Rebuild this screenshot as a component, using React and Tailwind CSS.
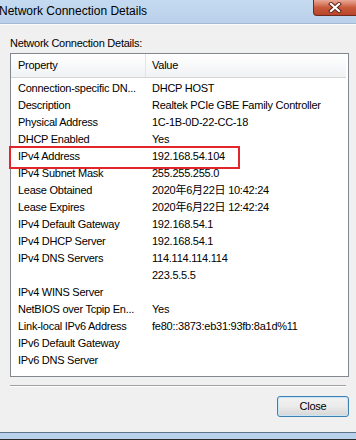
import React from "react";

const rows = [
  ["Connection-specific DN...", "DHCP HOST"],
  ["Description", "Realtek PCIe GBE Family Controller"],
  ["Physical Address", "1C-1B-0D-22-CC-18"],
  ["DHCP Enabled", "Yes"],
  ["IPv4 Address", "192.168.54.104"],
  ["IPv4 Subnet Mask", "255.255.255.0"],
  ["Lease Obtained", "2020年6月22日 10:42:24"],
  ["Lease Expires", "2020年6月22日 12:42:24"],
  ["IPv4 Default Gateway", "192.168.54.1"],
  ["IPv4 DHCP Server", "192.168.54.1"],
  ["IPv4 DNS Servers", "114.114.114.114"],
  ["", "223.5.5.5"],
  ["IPv4 WINS Server", ""],
  ["NetBIOS over Tcpip En...", "Yes"],
  ["Link-local IPv6 Address", "fe80::3873:eb31:93fb:8a1d%11"],
  ["IPv6 Default Gateway", ""],
  ["IPv6 DNS Server", ""],
];

function CloseX() {
  return (
    <svg width="14" height="11" viewBox="0 0 14 11">
      <path d="M3 2 L11 9 M11 2 L3 9" stroke="#5a1f14" strokeWidth="4" strokeLinecap="square" />
      <path d="M3 2 L11 9 M11 2 L3 9" stroke="#ffffff" strokeWidth="2.2" strokeLinecap="square" />
    </svg>
  );
}

export default function App() {
  return (
    <div className="relative w-[356px] h-[440px] overflow-hidden bg-[#f0f0f0] flex flex-col font-['Liberation_Sans','Noto_Sans_CJK_SC',sans-serif] text-black">
      {/* title bar */}
      <div className="h-[24px] shrink-0 bg-gradient-to-b from-[#c5daf0] to-[#b9d1ea] border-b border-[#a3bad3] flex items-center">
        <span className="text-[12px] leading-none -ml-[1px] pb-[2px]">Network Connection Details</span>
      </div>
      <div className="absolute top-0 right-0 w-[43px] h-[16px] rounded-bl-[4px] border-l border-b border-[#6e2a1c] bg-gradient-to-b from-[#e9a898] via-[#c95a3c] to-[#b8432a] flex items-center justify-center">
        <CloseX />
      </div>
      <div className="h-px bg-white/70 shrink-0" />

      {/* body */}
      <div className="flex-1 flex flex-col pl-[10px] pr-[7px] tracking-[-0.25px]">
        <div className="h-[28px] flex items-end pb-[4px] text-[11px] leading-none">Network Connection Details:</div>
        <div className="h-[324px] border border-[#828790] bg-white flex flex-col">
          <div className="h-[24px] shrink-0 flex text-[11px] bg-gradient-to-b from-white to-[#f1f2f4] border-b border-[#d5d5d5] mr-[2px]">
            <div className="w-[135px] pl-[7px] flex items-center border-r border-[#e3e4e6]">Property</div>
            <div className="pl-[6px] flex items-center">Value</div>
          </div>
          <div className="pt-[2px] flex flex-col">
            {rows.map(([k, v], i) => (
              <div key={i} className="h-[17px] flex items-center text-[11px] leading-none whitespace-nowrap">
                <div className="w-[141px] pl-[7px]">{k}</div>
                <div>{v}</div>
              </div>
            ))}
          </div>
        </div>
        <div className="mt-[8px] mr-[3px] h-[2px] border-t border-[#a0a0a0] border-b border-b-white" />
        <div className="flex justify-end pt-[9px]">
          <button className="w-[72px] h-[21px] rounded-[3px] border border-[#3c7fb1] bg-gradient-to-b from-[#f2f2f2] via-[#ebebeb] to-[#d6d6d6] text-[11px] leading-none shadow-[inset_0_0_0_1px_#c9e6f7]">
            Close
          </button>
        </div>
      </div>

      {/* bottom frame */}
      <div className="h-[8px] shrink-0 border-t border-[#5f738c] bg-[#b9d1ea] border-b border-b-[#2b2b2b]" />

      {/* highlight */}
      <div className="absolute left-[9px] top-[146px] w-[231px] h-[23px] border-2 border-[#e3262b]" />
    </div>
  );
}
